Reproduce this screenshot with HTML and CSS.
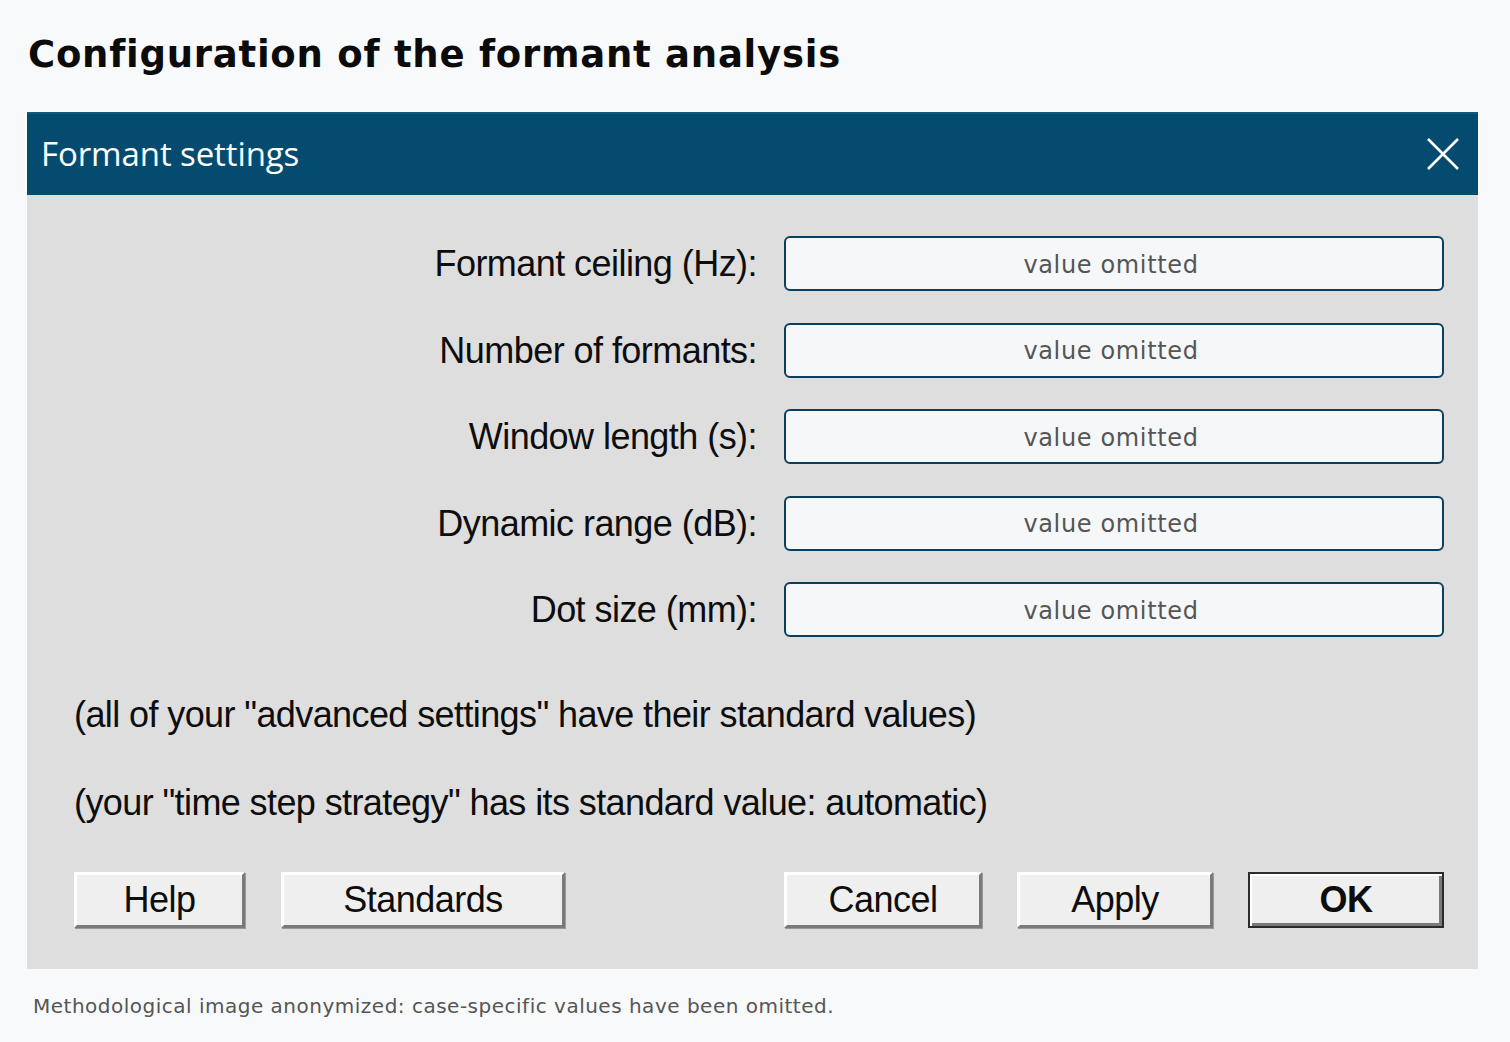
FILE: index.html
```html
<!DOCTYPE html>
<html lang="en">
<head>
<meta charset="utf-8">
<title>Configuration of the formant analysis</title>
<link rel="stylesheet" href="styles.css">
</head>
<body>
<header class="page-head">
  <h1 class="page-title">Configuration of the formant analysis</h1>
</header>
<section class="dialog">
  <div class="titlebar">
    <span class="titlebar-text">Formant settings</span>
    <svg class="close-icon" width="34" height="34" viewBox="0 0 34 34" aria-hidden="true">
      <path d="M2 2 L32 32 M32 2 L2 32" stroke="#ffffff" stroke-width="2.6" fill="none"/>
    </svg>
  </div>
  <div class="dialog-body">
    <div class="fields">
      <label class="field-label">Formant ceiling (Hz):</label>
      <div class="field-input">value omitted</div>
      <label class="field-label">Number of formants:</label>
      <div class="field-input">value omitted</div>
      <label class="field-label">Window length (s):</label>
      <div class="field-input">value omitted</div>
      <label class="field-label">Dynamic range (dB):</label>
      <div class="field-input">value omitted</div>
      <label class="field-label">Dot size (mm):</label>
      <div class="field-input">value omitted</div>
    </div>
    <p class="note note-first">(all of your "advanced settings" have their standard values)</p>
    <p class="note">(your "time step strategy" has its standard value: automatic)</p>
    <div class="buttons">
      <div class="btn-group">
        <button class="btn btn-help">Help</button>
        <button class="btn btn-standards">Standards</button>
      </div>
      <div class="btn-group">
        <button class="btn btn-cancel">Cancel</button>
        <button class="btn btn-apply">Apply</button>
        <button class="btn btn-ok">OK</button>
      </div>
    </div>
  </div>
</section>
<p class="footnote">Methodological image anonymized: case-specific values have been omitted.</p>
</body>
</html>
```
FILE: styles.css
```css
html, body {
  margin: 0;
  padding: 0;
  background: #f8f9fa;
}
body {
  width: 1510px;
  height: 1042px;
  overflow: hidden;
  font-family: "DejaVu Sans", sans-serif;
}
.page-head {
  height: 112px;
  padding-left: 28px;
  box-sizing: border-box;
}
.page-title {
  margin: 0;
  padding-top: 32px;
  font-family: "DejaVu Sans", sans-serif;
  font-weight: bold;
  font-size: 37px;
  line-height: 46px;
  color: #0b0b0b;
  letter-spacing: 0.75px;
}
.dialog {
  margin-left: 27px;
  width: 1451px;
  background: #dedede;
}
.titlebar {
  height: 83px;
  background: #054b70;
  border-top: 2px solid #0f5a80;
  box-sizing: border-box;
  display: flex;
  align-items: center;
  justify-content: space-between;
  padding: 0 18px 2px 14px;
}
.titlebar-text {
  font-family: "Open Sans", "Noto Sans", sans-serif;
  font-size: 33px;
  color: #ffffff;
  letter-spacing: -0.1px;
}
.close-icon {
  display: block;
}
.dialog-body {
  padding: 41px 34px 41px 47px;
}
.fields {
  display: grid;
  grid-template-columns: 1fr 660px;
  grid-auto-rows: 55px;
  column-gap: 27px;
  row-gap: 31.5px;
  align-items: center;
}
.field-label {
  text-align: right;
  font-family: "Liberation Sans", Arial, sans-serif;
  font-size: 36px;
  letter-spacing: -0.55px;
  color: #0d0d0d;
  line-height: 55px;
  height: 55px;
}
.field-input {
  height: 55px;
  box-sizing: border-box;
  border: 2px solid #0b3f60;
  border-radius: 6px;
  background: #f6f7f8;
  display: flex;
  align-items: center;
  justify-content: center;
  font-family: "DejaVu Sans", sans-serif;
  font-size: 24px;
  color: #555555;
  letter-spacing: 0.65px;
  padding: 2px 6px 0 0;
}
.note {
  margin: 0;
  font-family: "Liberation Sans", Arial, sans-serif;
  font-size: 36px;
  letter-spacing: -0.6px;
  line-height: 44px;
  color: #0d0d0d;
  height: 88px;
  display: flex;
  align-items: center;
}
.note-first {
  margin-top: 34px;
}
.buttons {
  display: flex;
  justify-content: space-between;
  margin-top: 25px;
}
.btn-group {
  display: flex;
  gap: 35px;
}
.btn {
  height: 56px;
  box-sizing: border-box;
  background: #efefef;
  border: 3px solid;
  border-color: #ffffff #7a7a7a #7a7a7a #ffffff;
  font-family: "Liberation Sans", Arial, sans-serif;
  font-size: 36px;
  letter-spacing: -0.5px;
  color: #0d0d0d;
  padding: 0;
  display: flex;
  align-items: center;
  justify-content: center;
  box-shadow: 1px 1px 0 #9a9a9a;
}
.btn-help { width: 171px; }
.btn-standards { width: 284px; margin-left: 1px; }
.btn-cancel { width: 198px; }
.btn-apply { width: 196px; }
.btn-ok {
  width: 196px;
  font-weight: bold;
  border: 2px solid #2b2b2b;
  box-shadow: inset 2px 2px 0 #ffffff, inset -3px -3px 0 #7a7a7a;
}
.footnote {
  margin: 25px 0 0 33px;
  font-family: "DejaVu Sans", sans-serif;
  font-size: 20px;
  color: #555555;
  letter-spacing: 0.5px;
}
```
